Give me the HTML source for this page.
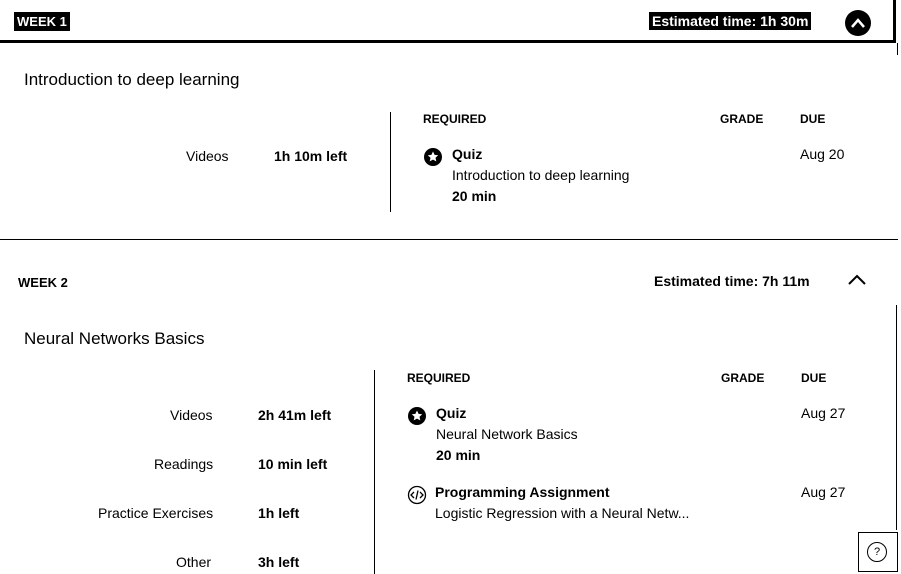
<!DOCTYPE html>
<html><head><style>
body{margin:0;width:901px;height:574px;background:#fff;position:relative;overflow:hidden;font-family:"Liberation Sans",sans-serif;color:#000}
.a{position:absolute;white-space:nowrap}
.b{font-weight:bold}
.s{font-size:12px;font-weight:bold}
.t{font-size:14px}
</style></head><body>
<div class="a" style="left:0;top:40px;width:896px;height:3px;background:#000"></div>
<div class="a" style="left:893px;top:0;width:3px;height:43px;background:#000"></div>
<div class="a" style="left:897px;top:43px;width:1px;height:12px;background:#000"></div>
<div class="a b" style="left:14px;top:12px;background:#000;color:#fff;font-size:13px;padding:2px 3px">WEEK 1</div>
<div class="a b" style="left:649px;top:12px;background:#000;color:#fff;font-size:14px;padding:1px 3px">Estimated time: 1h 30m</div>
<div class="a" style="left:845px;top:10px;width:26px;height:26px;border-radius:50%;background:#000"></div>
<svg class="a" style="left:845px;top:10px" width="26" height="26"><path d="M7 17 L13 10 L19 17" stroke="#fff" stroke-width="2.5" fill="none"/></svg>

<div class="a" style="left:24px;top:70px;font-size:17px">Introduction to deep learning</div>
<div class="a t" style="left:186px;top:148px">Videos</div>
<div class="a t b" style="left:274px;top:148px">1h 10m left</div>
<div class="a" style="left:390px;top:112px;width:1px;height:100px;background:#000"></div>
<div class="a s" style="left:423px;top:112px">REQUIRED</div>
<div class="a s" style="left:720px;top:112px">GRADE</div>
<div class="a s" style="left:800px;top:112px">DUE</div>
<svg class="a" style="left:423px;top:147px" width="20" height="20"><circle cx="10" cy="10" r="9" fill="#000"/><path d="M10 4.5l1.6 3.4 3.6.4-2.7 2.5.8 3.6L10 12.6 6.7 14.4l.8-3.6-2.7-2.5 3.6-.4z" fill="#fff"/></svg>
<div class="a t b" style="left:452px;top:146px">Quiz</div>
<div class="a t" style="left:452px;top:167px">Introduction to deep learning</div>
<div class="a t b" style="left:452px;top:188px">20 min</div>
<div class="a t" style="left:800px;top:146px">Aug 20</div>
<div class="a" style="left:0;top:239px;width:898px;height:1px;background:#000"></div>

<div class="a s" style="left:18px;top:275px;font-size:13px">WEEK 2</div>
<div class="a t b" style="left:654px;top:273px">Estimated time: 7h 11m</div>
<svg class="a" style="left:846px;top:272px" width="22" height="16"><path d="M3 12 L11 4 L19 12" stroke="#000" stroke-width="2" fill="none"/></svg>
<div class="a" style="left:896px;top:305px;width:1px;height:225px;background:#000"></div>
<div class="a" style="left:24px;top:329px;font-size:17px">Neural Networks Basics</div>
<div class="a" style="left:374px;top:370px;width:1px;height:204px;background:#000"></div>
<div class="a t" style="left:170px;top:407px">Videos</div>
<div class="a t" style="left:154px;top:456px">Readings</div>
<div class="a t" style="left:98px;top:505px">Practice Exercises</div>
<div class="a t" style="left:176px;top:554px">Other</div>
<div class="a t b" style="left:258px;top:407px">2h 41m left</div>
<div class="a t b" style="left:258px;top:456px">10 min left</div>
<div class="a t b" style="left:258px;top:505px">1h left</div>
<div class="a t b" style="left:258px;top:554px">3h left</div>
<div class="a s" style="left:407px;top:371px">REQUIRED</div>
<div class="a s" style="left:721px;top:371px">GRADE</div>
<div class="a s" style="left:801px;top:371px">DUE</div>
<svg class="a" style="left:407px;top:406px" width="20" height="20"><circle cx="10" cy="10" r="9" fill="#000"/><path d="M10 4.5l1.6 3.4 3.6.4-2.7 2.5.8 3.6L10 12.6 6.7 14.4l.8-3.6-2.7-2.5 3.6-.4z" fill="#fff"/></svg>
<div class="a t b" style="left:436px;top:405px">Quiz</div>
<div class="a t" style="left:436px;top:426px">Neural Network Basics</div>
<div class="a t b" style="left:436px;top:447px">20 min</div>
<div class="a t" style="left:801px;top:405px">Aug 27</div>
<svg class="a" style="left:407px;top:485px" width="20" height="20"><circle cx="10" cy="10" r="8.5" fill="none" stroke="#000" stroke-width="1.3"/><path d="M7 7l-3 3 3 3M13 7l3 3-3 3M11 5.5l-2 9" stroke="#000" stroke-width="1.3" fill="none"/></svg>
<div class="a t b" style="left:435px;top:484px">Programming Assignment</div>
<div class="a t" style="left:435px;top:505px">Logistic Regression with a Neural Netw...</div>
<div class="a t" style="left:801px;top:484px">Aug 27</div>
<div class="a" style="left:858px;top:532px;width:38px;height:38px;border:1px solid #000"></div>
<div class="a" style="left:867px;top:542px;width:18px;height:18px;border:1px solid #000;border-radius:50%;font-size:11px;text-align:center;line-height:18px">?</div>
</body></html>
